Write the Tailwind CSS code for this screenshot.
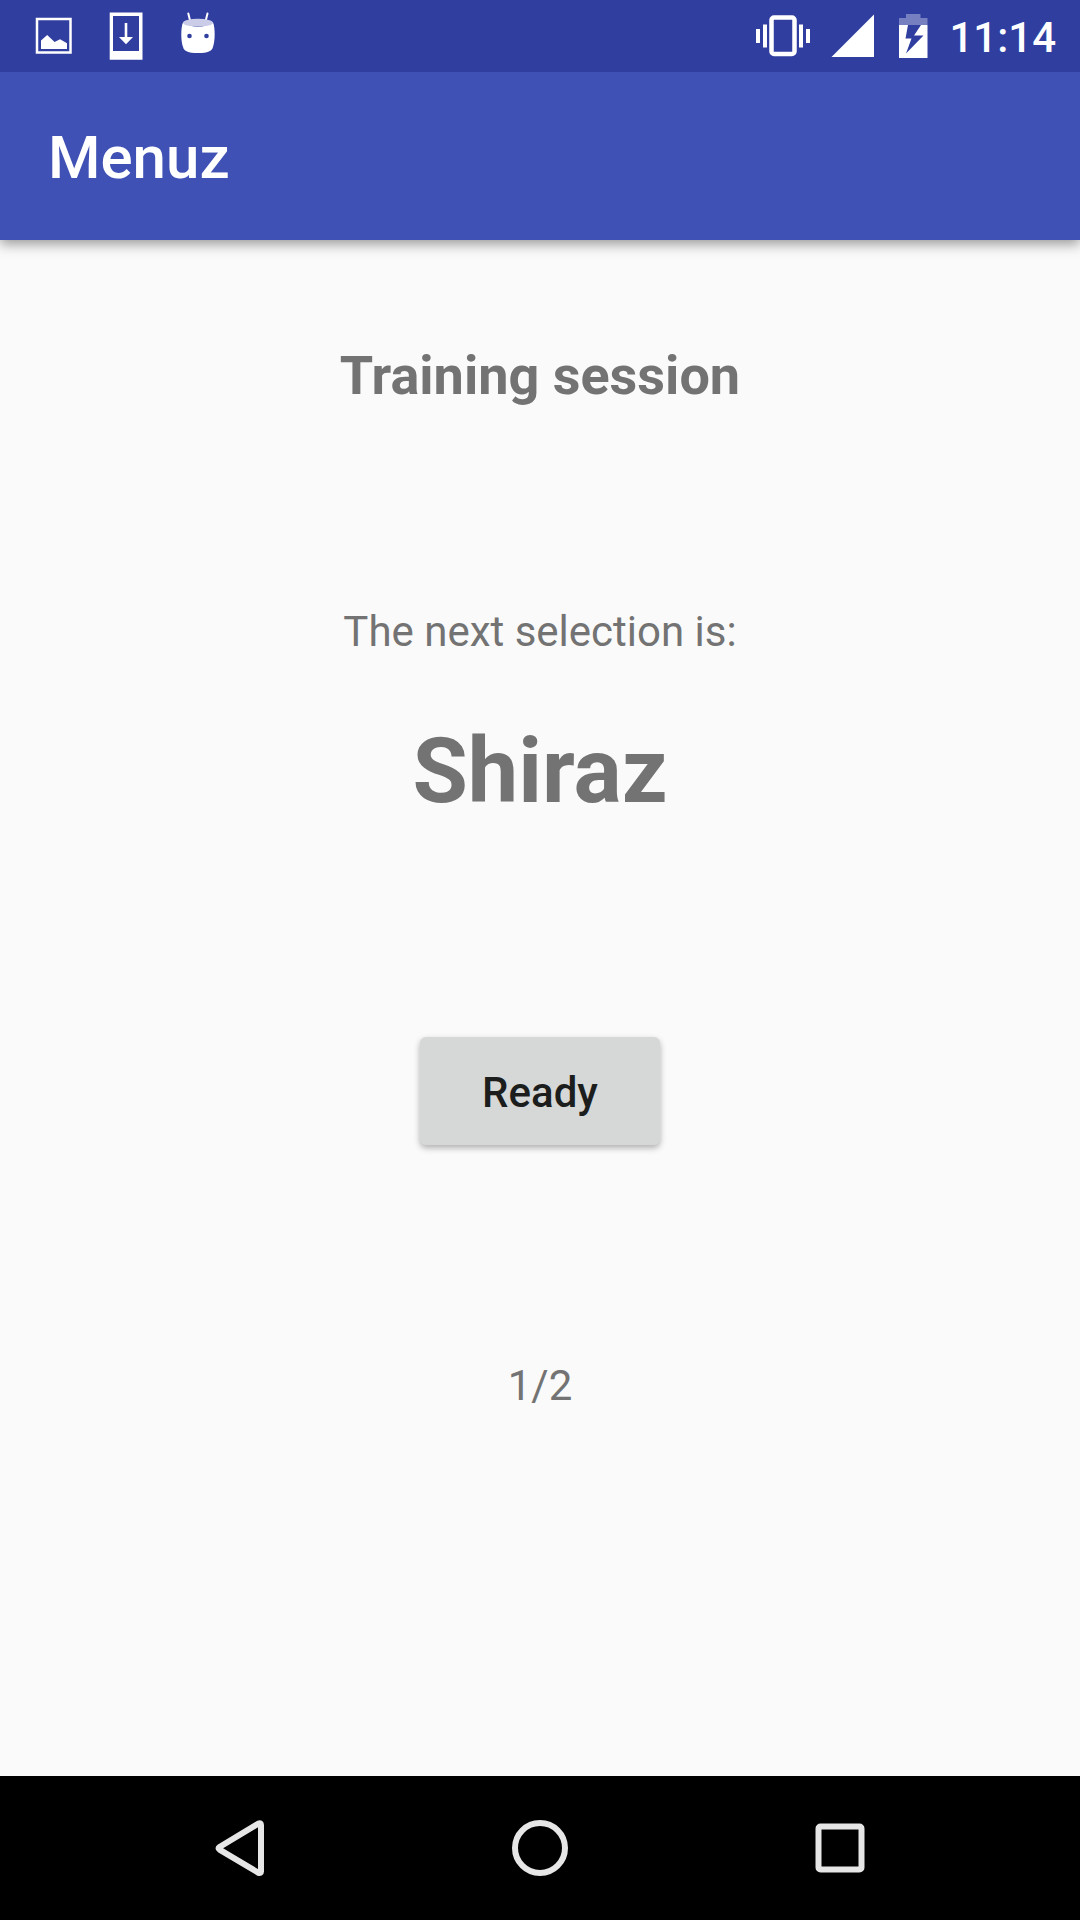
<!DOCTYPE html>
<html lang="en">
<head>
<meta charset="utf-8">
<meta name="viewport" content="width=device-width, initial-scale=1">
<title>Menuz</title>
<script src="https://cdn.jsdelivr.net/npm/@tailwindcss/browser@4"></script>
</head>
<body class="flex min-h-screen flex-col bg-[#fafafa] font-[Roboto,sans-serif] text-[#737373]">
  <!-- System status bar -->
  <div class="z-20 flex h-[72px] items-center justify-between bg-[#303f9f] pr-6 pl-[18px] text-white">
    <div class="flex">
      <svg class="size-[72px]" viewBox="0 0 72 72" role="img" aria-label="Screenshot saved">
        <rect x="19" y="19" width="33.5" height="33.5" fill="none" stroke="currentColor" stroke-width="2.5"/>
        <path d="M23 49V40.5L29.2 35L36.6 42L42 39.2L49 43.2V49Z" fill="currentColor"/>
      </svg>
      <svg class="size-[72px]" viewBox="0 0 72 72" role="img" aria-label="Update available">
        <path d="M19.7 12.5H52.5V59.8H19.7ZM23 16V51H49V16Z" fill="currentColor" fill-rule="evenodd"/>
        <path d="M34.7 23H37.3V37H43L36 44.3L29 37H34.7Z" fill="currentColor"/>
      </svg>
      <svg class="size-[72px]" viewBox="0 0 72 72" role="img" aria-label="Android notification">
        <path d="M26.3 13.5L28.3 21.5M45.5 13.5L43.5 21.5" fill="none" stroke="currentColor" stroke-width="2" stroke-linecap="round"/>
        <path d="M21 22.5Q36 31 51 22.5C53.2 27 53.4 41 50.8 47.5C50 51 46 53 36 53C26 53 22 51 21.2 47.5C18.6 41 18.8 27 21 22.5Z" fill="currentColor"/>
        <ellipse cx="36" cy="22.7" rx="15" ry="3.9" fill="#cbcde8"/>
        <circle cx="27.5" cy="36" r="2.3" fill="#303f9f"/>
        <circle cx="44.5" cy="36" r="2.3" fill="#303f9f"/>
      </svg>
    </div>
    <div class="flex items-center">
      <svg class="mr-5 h-[72px] w-14" viewBox="0 0 56 72" role="img" aria-label="Vibrate">
        <rect x="16.5" y="17.5" width="23" height="36.5" rx="2.5" fill="none" stroke="currentColor" stroke-width="4.500"/>
        <path d="M1 29H5V43H1ZM8 24.5H12V47.5H8ZM44 24.5H48V47.5H44ZM51 29H55V43H51Z" fill="currentColor"/>
      </svg>
      <svg class="mr-6 h-[72px] w-11" viewBox="0 0 44 72" role="img" aria-label="Full signal">
        <path d="M0.5 57L43 14.5V57Z" fill="currentColor"/>
      </svg>
      <svg class="mr-5 h-[72px] w-[30px]" viewBox="0 0 30 72" role="img" aria-label="Battery charging">
        <path d="M7 14H21.5V18H28.5V25H0V18H7Z" fill="#767fc0"/>
        <path d="M0 25H28.500V58H0Z" fill="currentColor"/>
        <path d="M9 25H22L15 35.5H24.500L7 53.500L12.500 38.500H6.500Z" fill="#303f9f"/>
      </svg>
      <time class="pt-1 text-[42px] leading-[48px] font-medium">11:14</time>
    </div>
  </div>

  <!-- App bar -->
  <header class="z-10 flex h-[168px] items-center bg-[#3f51b5] px-12 pt-1 text-white shadow-[0_4px_12px_rgba(0,0,0,0.4)]">
    <h1 class="text-[60px] leading-[72px] font-medium">Menuz</h1>
  </header>

  <main class="flex grow flex-col items-center pt-[104px] text-center">
    <h2 class="text-[54px] leading-[64px] font-bold">Training session</h2>
    <p class="mt-[200px] text-[42px] leading-[48px]">The next selection is:</p>
    <p class="mt-16 text-[90px] leading-[104px] font-bold">Shiraz</p>
    <button type="button" class="mt-[213px] h-[108px] w-60 rounded-md bg-[#d6d8d7] pt-1 text-[42px] leading-[48px] font-medium text-[#1c1d1d] shadow-[0_3px_6px_rgba(0,0,0,0.3)]">Ready</button>
    <p class="mt-[217px] text-[42px] leading-[48px]">1/2</p>
  </main>

  <!-- System navigation -->
  <nav class="flex h-36 items-center justify-center gap-[156px] bg-black text-[#e6e6e6]">
    <button type="button" aria-label="Back" class="size-36">
      <svg class="size-36" viewBox="0 0 144 144" fill="none" stroke="currentColor" stroke-width="6" stroke-linejoin="round">
        <path d="M51.500 71Q49.500 72.300 51.500 73.600L90.500 96.800Q93 97.500 93 95.500V49Q93 46.500 90.500 47.500Z"/>
      </svg>
    </button>
    <button type="button" aria-label="Home" class="size-36">
      <svg class="size-36" viewBox="0 0 144 144" fill="none" stroke="currentColor" stroke-width="6">
        <circle cx="72" cy="72" r="25"/>
      </svg>
    </button>
    <button type="button" aria-label="Recent apps" class="size-36">
      <svg class="size-36" viewBox="0 0 144 144" fill="none" stroke="currentColor" stroke-width="6">
        <rect x="50.5" y="50.5" width="43" height="43" rx="2"/>
      </svg>
    </button>
  </nav>
</body>
</html>
